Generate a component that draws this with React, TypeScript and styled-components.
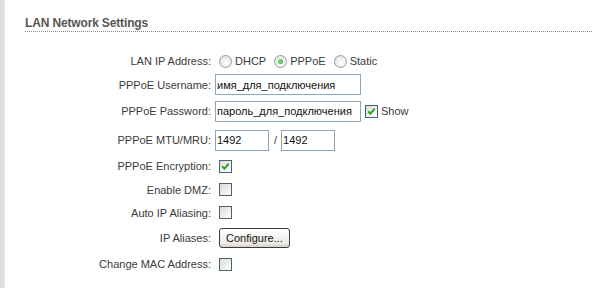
import React from "react";
import styled, { createGlobalStyle } from "styled-components";

const Global = createGlobalStyle`
  html, body { margin: 0; padding: 0; background: #fff; }
  body { font-family: "Liberation Sans", Arial, sans-serif; font-size: 11px; color: #3a3a3a; }
`;

const Page = styled.div`
  display: flex;
  width: 592px;
  height: 288px;
  overflow: hidden;
`;

const SideBar = styled.div`
  width: 4px;
  flex: none;
  background: #dedede;
  border-right: 1px solid #ececec;
`;

const Content = styled.div`
  flex: 1;
  padding: 17px 0 0 20px;
`;

const Title = styled.div`
  font-weight: bold;
  font-size: 12px;
  letter-spacing: -0.15px;
  color: #555;
  padding-bottom: 1px;
  border-bottom: 1px dotted #8a8a8a;
  line-height: 13px;
`;

const Form = styled.div`
  margin-top: 17px;
  display: flex;
  flex-direction: column;
`;

const Row = styled.div<{ $h: number }>`
  display: grid;
  grid-template-columns: 186px 1fr;
  column-gap: 4px;
  align-items: center;
  height: ${(p) => p.$h}px;
`;

const Label = styled.div`
  text-align: right;
  white-space: nowrap;
`;

const Controls = styled.div`
  display: flex;
  align-items: center;
`;

const RadioItem = styled.label`
  display: flex;
  align-items: center;
  margin-left: 4px;
  margin-right: 4px;
  gap: 3px;
`;

const RadioCircle = styled.span<{ $on?: boolean }>`
  width: 11px;
  height: 11px;
  border-radius: 50%;
  border: 1px solid #8b9cb1;
  background: radial-gradient(circle at 60% 65%, #ffffff 0%, #e6e6e0 70%, #d4d4cc 100%);
  display: flex;
  align-items: center;
  justify-content: center;
  &::after {
    content: "";
    display: ${(p) => (p.$on ? "block" : "none")};
    width: 5px;
    height: 5px;
    border-radius: 50%;
    background: radial-gradient(circle at 40% 40%, #8fe08f, #21a121);
  }
`;

const TextInput = styled.div<{ $w: number }>`
  box-sizing: border-box;
  width: ${(p) => p.$w}px;
  height: 21px;
  border: 1px solid #8ea4bb;
  padding: 0 1px;
  display: flex;
  align-items: center;
  color: #111;
  background: #fff;
  white-space: nowrap;
  overflow: hidden;
`;

const Slash = styled.span`
  margin: 0 4px 0 5px;
`;

const Box = styled.span<{ $on?: boolean }>`
  box-sizing: border-box;
  width: 13px;
  height: 13px;
  margin-left: 4px;
  border: 1px solid #46607a;
  background: linear-gradient(135deg, #dcdcd4 0%, #f4f4f0 70%, #fff 100%);
  display: inline-flex;
  align-items: center;
  justify-content: center;
`;

const ShowLabel = styled.span`
  margin-left: 3px;
`;

const Button = styled.div`
  margin-left: 4px;
  box-sizing: border-box;
  height: 20px;
  padding: 0 6px;
  border: 1px solid #3c3c3c;
  border-radius: 3px;
  background: linear-gradient(#ffffff, #ecebe6 80%, #d6d0c5);
  display: flex;
  align-items: center;
  color: #111;
`;

const Check = () => (
  <svg width="9" height="9" viewBox="0 0 9 9">
    <path d="M1.2 4.3 L3.4 6.6 L7.8 1.6" fill="none" stroke="#21a121" strokeWidth="1.9" />
  </svg>
);

export default function App() {
  return (
    <>
      <Global />
      <Page>
        <SideBar />
        <Content>
          <Title>LAN Network Settings</Title>
          <Form>
            <Row $h={24}>
              <Label>LAN IP Address:</Label>
              <Controls>
                <RadioItem>
                  <RadioCircle />
                  DHCP
                </RadioItem>
                <RadioItem>
                  <RadioCircle $on />
                  PPPoE
                </RadioItem>
                <RadioItem>
                  <RadioCircle />
                  Static
                </RadioItem>
              </Controls>
            </Row>
            <Row $h={23}>
              <Label>PPPoE Username:</Label>
              <Controls>
                <TextInput $w={146}>имя_для_подключения</TextInput>
              </Controls>
            </Row>
            <Row $h={30}>
              <Label>PPPoE Password:</Label>
              <Controls>
                <TextInput $w={146}>пароль_для_подключения</TextInput>
                <Box $on>
                  <Check />
                </Box>
                <ShowLabel>Show</ShowLabel>
              </Controls>
            </Row>
            <Row $h={28}>
              <Label>PPPoE MTU/MRU:</Label>
              <Controls>
                <TextInput $w={54}>1492</TextInput>
                <Slash>/</Slash>
                <TextInput $w={54}>1492</TextInput>
              </Controls>
            </Row>
            <Row $h={24}>
              <Label>PPPoE Encryption:</Label>
              <Controls>
                <Box $on>
                  <Check />
                </Box>
              </Controls>
            </Row>
            <Row $h={23}>
              <Label>Enable DMZ:</Label>
              <Controls>
                <Box />
              </Controls>
            </Row>
            <Row $h={23}>
              <Label>Auto IP Aliasing:</Label>
              <Controls>
                <Box />
              </Controls>
            </Row>
            <Row $h={27}>
              <Label>IP Aliases:</Label>
              <Controls>
                <Button>Configure...</Button>
              </Controls>
            </Row>
            <Row $h={26}>
              <Label>Change MAC Address:</Label>
              <Controls>
                <Box />
              </Controls>
            </Row>
          </Form>
        </Content>
      </Page>
    </>
  );
}
